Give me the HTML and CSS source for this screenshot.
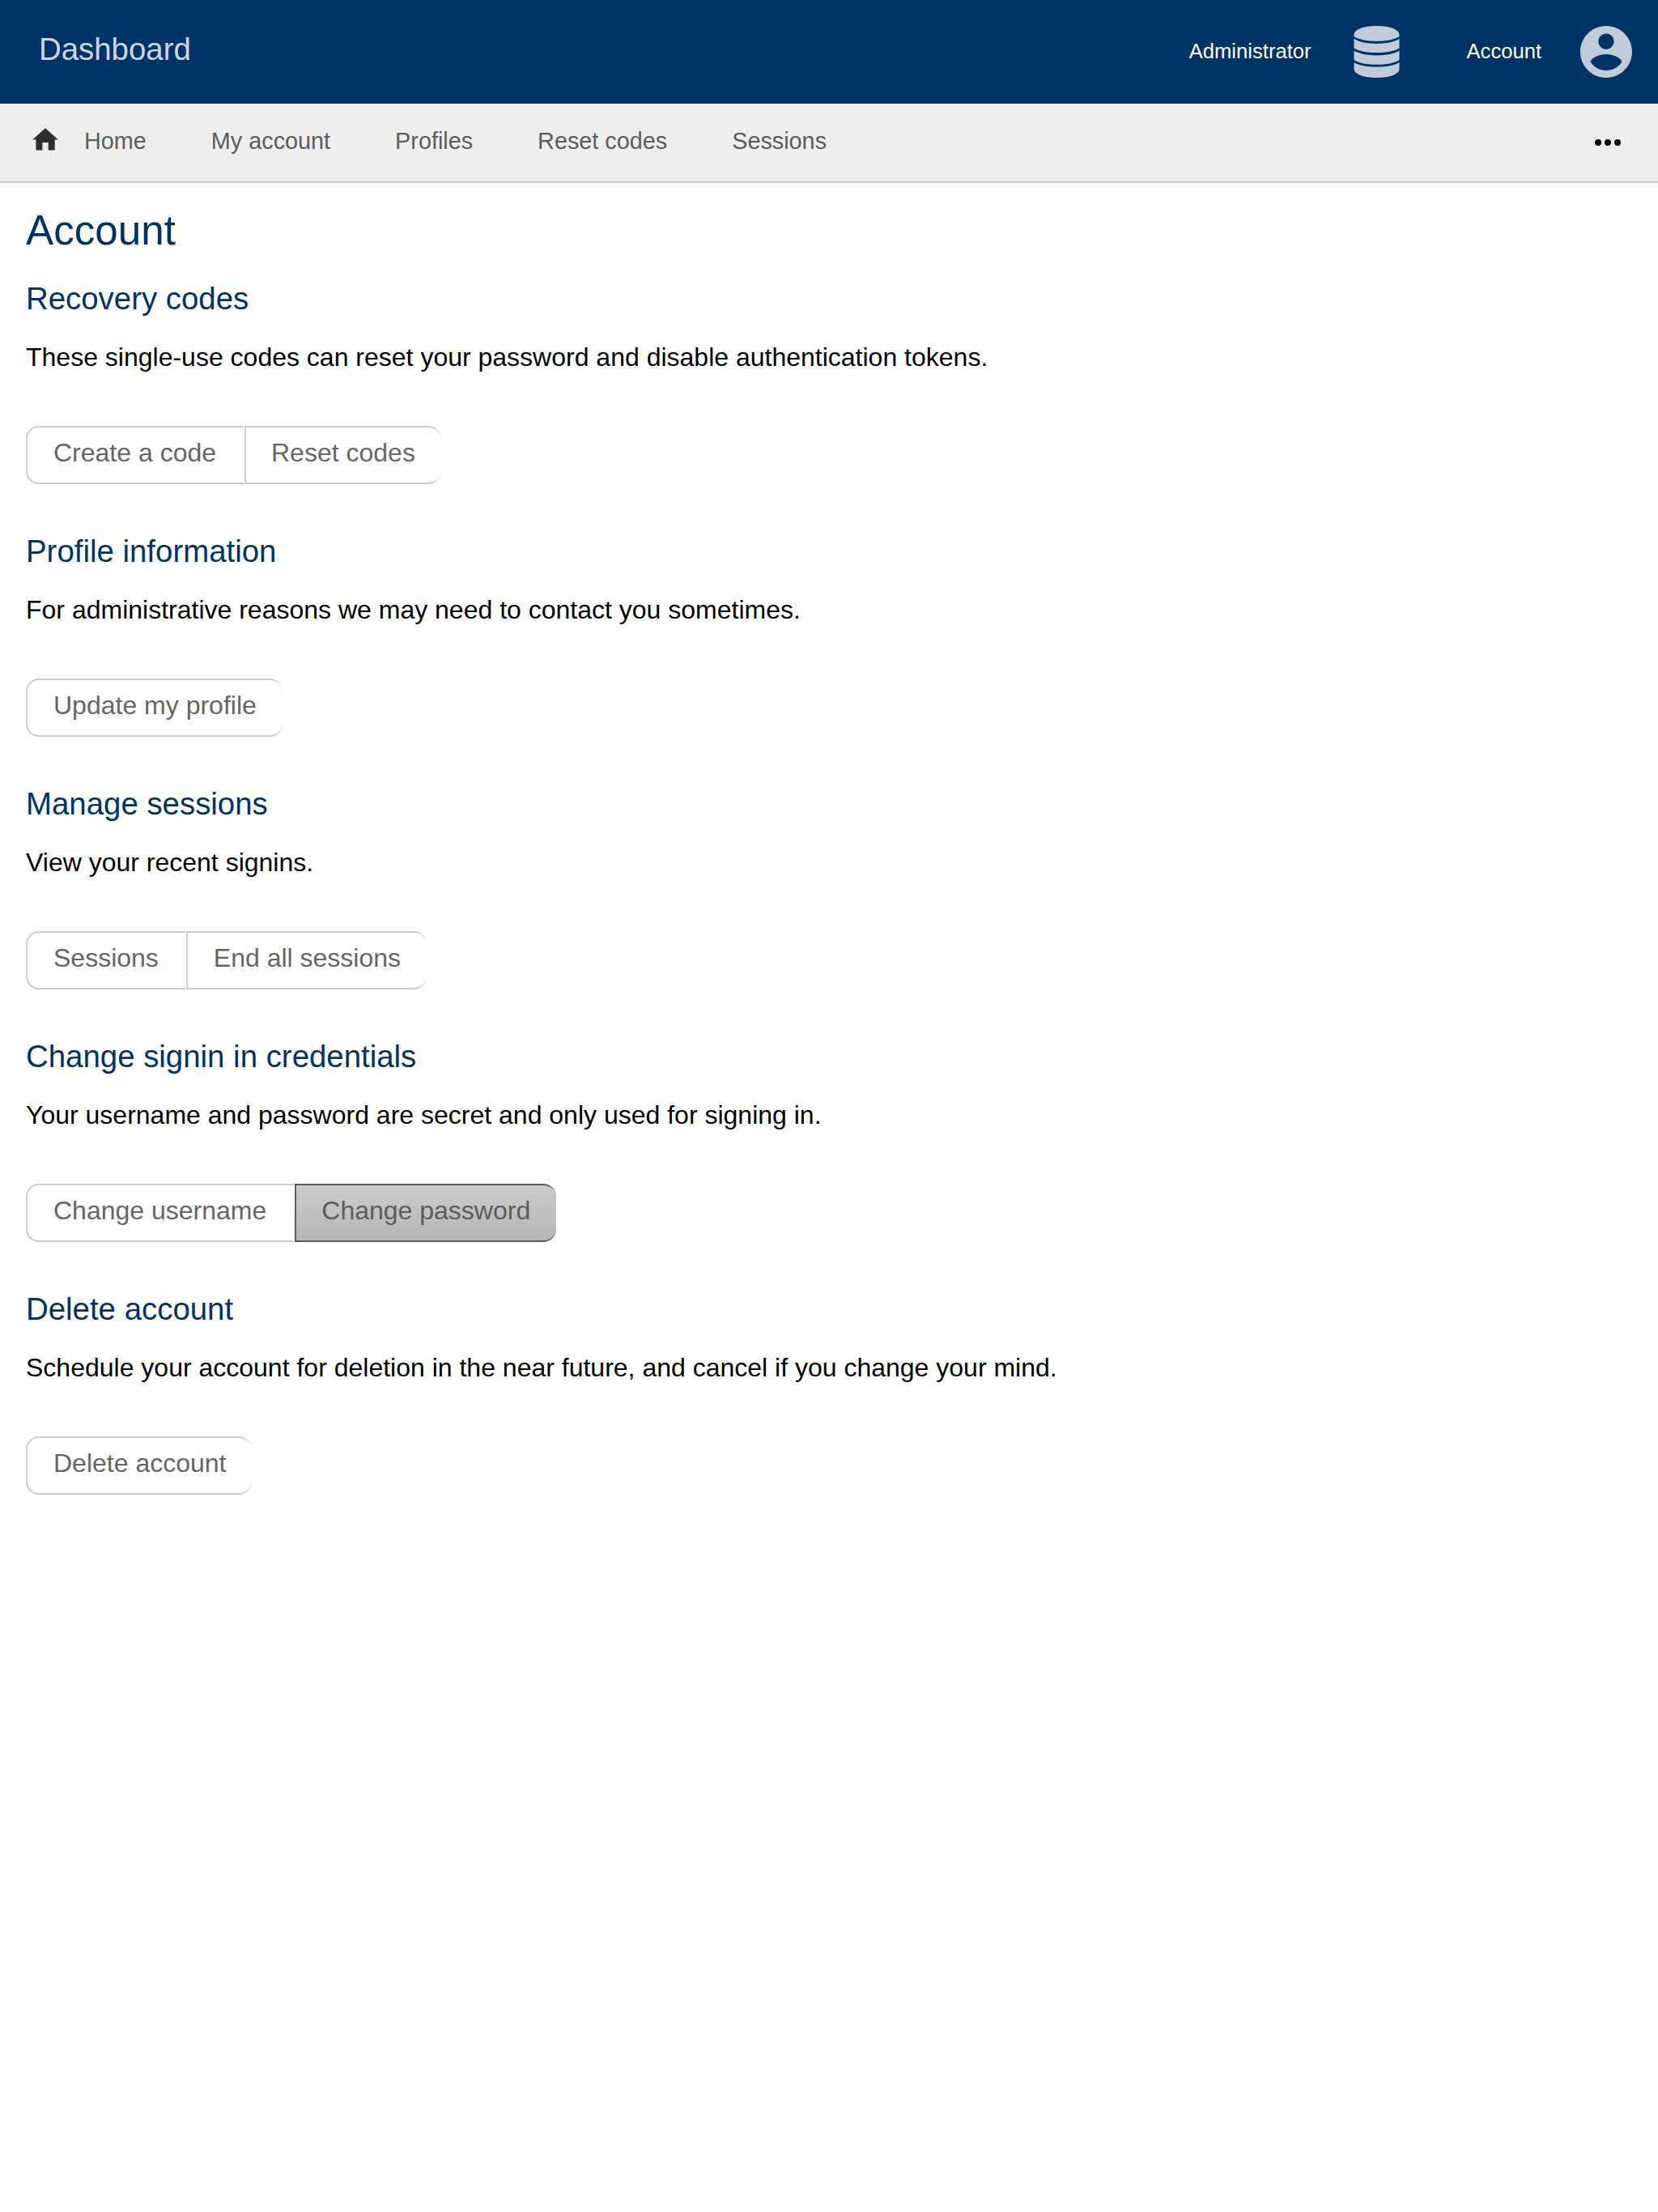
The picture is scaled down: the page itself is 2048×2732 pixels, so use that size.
FILE: index.html
```html
<!DOCTYPE html>
<html lang="en">
<head>
<meta charset="utf-8">
<title>Dashboard</title>
<link rel="stylesheet" href="styles.css">
</head>
<body>
<header class="header">
  <a class="brand">Dashboard</a>
  <div class="menus">
    <span class="menu-label">Administrator</span>
    <svg class="menu-icon menu-icon-admin" viewBox="-4.500 0 64 64"><path d="M0 11C0 4.500 12 0 28 0S56 4.500 56 11V13C50 17 40 18.800 28 18.800S6 17 0 13ZM0 15.800C6 20 16 22 28 22S50 20 56 15.800V27.500C50 31.200 40 33 28 33S6 31.200 0 27.500ZM0 30.500C6 34.500 16 36.400 28 36.400S50 34.500 56 30.500V42C50 46 40 47.800 28 47.800S6 46 0 42ZM0 45C6 49 16 50.700 28 50.700S50 49 56 45V53C56 59.500 44 64 28 64S0 59.500 0 53Z"/></svg>
    <span class="menu-label">Account</span>
    <svg class="menu-icon" viewBox="2 2 20 20"><path d="M12 2C6.480 2 2 6.480 2 12s4.480 10 10 10 10-4.480 10-10S17.520 2 12 2zm0 3c1.660 0 3 1.340 3 3s-1.340 3-3 3-3-1.340-3-3 1.340-3 3-3zm0 14.200c-2.500 0-4.710-1.280-6-3.220.030-1.990 4-3.080 6-3.080 1.990 0 5.970 1.090 6 3.080-1.290 1.940-3.500 3.220-6 3.220z"/></svg>
  </div>
</header>
<nav class="nav">
  <svg class="nav-home" viewBox="0 0 32 28"><path d="M16 .3 31.800 14.500H27.700V27.400H19.700V18H12.400V27.400H4.400V14.500H.2Z"/></svg>
  <a class="nav-link">Home</a>
  <a class="nav-link">My account</a>
  <a class="nav-link">Profiles</a>
  <a class="nav-link">Reset codes</a>
  <a class="nav-link">Sessions</a>
  <svg class="nav-more" viewBox="0 0 32 8"><circle cx="4" cy="4" r="4"/><circle cx="16" cy="4" r="4"/><circle cx="28" cy="4" r="4"/></svg>
</nav>
<main class="content">
  <h1>Account</h1>
  <section class="section">
    <h2>Recovery codes</h2>
    <p>These single-use codes can reset your password and disable authentication tokens.</p>
    <div class="buttons"><a class="button">Create a code</a><a class="button">Reset codes</a></div>
  </section>
  <section class="section">
    <h2>Profile information</h2>
    <p>For administrative reasons we may need to contact you sometimes.</p>
    <div class="buttons"><a class="button">Update my profile</a></div>
  </section>
  <section class="section">
    <h2>Manage sessions</h2>
    <p>View your recent signins.</p>
    <div class="buttons"><a class="button">Sessions</a><a class="button">End all sessions</a></div>
  </section>
  <section class="section">
    <h2>Change signin in credentials</h2>
    <p>Your username and password are secret and only used for signing in.</p>
    <div class="buttons"><a class="button">Change username</a><a class="button button-active">Change password</a></div>
  </section>
  <section class="section">
    <h2>Delete account</h2>
    <p>Schedule your account for deletion in the near future, and cancel if you change your mind.</p>
    <div class="buttons"><a class="button">Delete account</a></div>
  </section>
</main>
</body>
</html>
```
FILE: styles.css
```css
* {
  box-sizing: border-box;
}

body {
  margin: 0;
  background: #fff;
  color: #000;
  font: 32px/48px "Liberation Sans", Arial, sans-serif;
}

.header {
  display: flex;
  align-items: center;
  justify-content: space-between;
  height: 128px;
  padding: 0 32px 0 48px;
  background: #036;
}

.brand {
  padding-bottom: 6px;
  color: #ccd6e0;
  font-size: 38.4px;
}

.menus {
  display: flex;
  align-items: center;
  gap: 48px;
}

.menu-label {
  padding-bottom: 2px;
  color: #fff;
  font-size: 25.6px;
  line-height: 32px;
}

.menu-icon {
  width: 64px;
  height: 64px;
  fill: #c0ccd9;
}

.menu-icon-admin {
  margin-right: 32px;
}

.nav {
  display: flex;
  align-items: center;
  height: 98px;
  padding: 0 44px 0 40px;
  background: #eee;
  border-bottom: 2px solid #ccc;
}

.nav-home {
  width: 32px;
  height: 28px;
  margin: 0 32px 8px 0;
  fill: #2e2e2e;
}

.nav-link {
  margin-right: 80px;
  padding-bottom: 4px;
  color: #5c5c5c;
  font-size: 28.8px;
}

.nav-more {
  width: 32px;
  height: 8px;
  margin-left: auto;
  margin-right: 2px;
}

.content {
  padding: 27px 32px;
}

h1,
h2 {
  margin: 0;
  color: #036;
  font-weight: normal;
}

h1 {
  font-size: 51.2px;
  line-height: 64px;
}

h2 {
  font-size: 38.4px;
  line-height: 48px;
}

p {
  margin: 24px 0 61px;
}

.section {
  height: 312px;
  padding-top: 28px;
}

.buttons {
  display: flex;
}

.button {
  height: 72px;
  padding: 7px 32px 0;
  border: 2px solid #ccc;
  border-right: 0;
  color: #666;
  line-height: 48px;
}

.button:not(:last-child) {
  padding-right: 33.6px;
}

.button + .button {
  margin-left: 1px;
  padding-left: 31.4px;
}

.button:first-child {
  border-top-left-radius: 16px;
  border-bottom-left-radius: 16px;
}

.button:last-child {
  border-top-right-radius: 16px;
  border-bottom-right-radius: 16px;
}

.button-active {
  border-color: #5c5c5c;
  background: linear-gradient(#ccc, #b5b5b5);
  color: #5c5c5c;
}
```
